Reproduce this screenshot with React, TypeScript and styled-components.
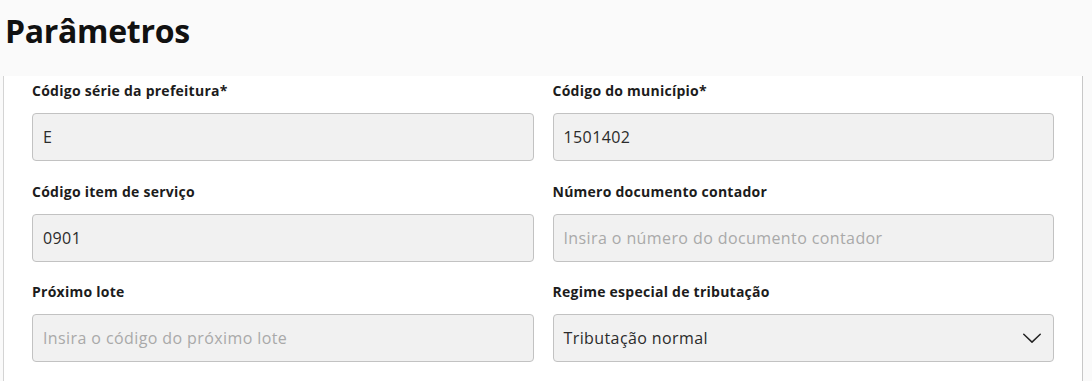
import styled, { createGlobalStyle } from 'styled-components'

const GlobalStyle = createGlobalStyle`
  html, body {
    margin: 0;
    padding: 0;
    background: #fafafa;
    font-family: 'Open Sans', 'Noto Sans', sans-serif;
  }
`

const Page = styled.div`
  width: 1092px;
  height: 381px;
  overflow: hidden;
  background: #fafafa;
  display: flex;
  flex-direction: column;
`

const Title = styled.h1`
  margin: 0;
  height: 76px;
  flex: none;
  padding: 8px 0 0 5px;
  box-sizing: border-box;
  font-size: 32px;
  font-weight: 700;
  letter-spacing: -0.3px;
  line-height: 46px;
  color: #111;
`

const Card = styled.div`
  flex: 1;
  margin: 0 9px 0 3px;
  background: #fff;
  border-left: 1px solid #d4d4d4;
  border-right: 1px solid #c8c8c8;
  padding: 4px 28px 20px 28px;
  display: grid;
  grid-template-columns: 1fr 1fr;
  align-content: start;
  column-gap: 19px;
  row-gap: 19.5px;
`

const Field = styled.div`
  display: flex;
  flex-direction: column;
`

const Label = styled.label`
  font-size: 14px;
  font-weight: 700;
  color: #1c1c1c;
  line-height: 22px;
  margin-bottom: 11px;
  letter-spacing: 0.25px;
`

const Control = styled.div<{ $placeholder?: boolean }>`
  height: 48px;
  box-sizing: border-box;
  border: 1px solid #c2c2c2;
  border-radius: 4px;
  background: #f1f1f1;
  padding: 0 10px;
  display: flex;
  align-items: center;
  justify-content: space-between;
  font-size: 16px;
  letter-spacing: 0.4px;
  color: ${(p) => (p.$placeholder ? '#a9a9a9' : '#2b2b2b')};
`

const Chevron = () => (
  <svg width="22" height="22" viewBox="0 0 24 24" fill="none" stroke="#222" strokeWidth="1.6" strokeLinecap="round" strokeLinejoin="round">
    <polyline points="3 8 12 16.5 21 8" />
  </svg>
)

const fields = [
  { label: 'Código série da prefeitura*', value: 'E' },
  { label: 'Código do município*', value: '1501402' },
  { label: 'Código item de serviço', value: '0901' },
  { label: 'Número documento contador', placeholder: 'Insira o número do documento contador' },
  { label: 'Próximo lote', placeholder: 'Insira o código do próximo lote' },
  { label: 'Regime especial de tributação', value: 'Tributação normal', select: true },
]

export default function App() {
  return (
    <Page>
      <GlobalStyle />
      <Title>Parâmetros</Title>
      <Card>
        {fields.map((f) => (
          <Field key={f.label}>
            <Label>{f.label}</Label>
            <Control $placeholder={!f.value}>
              <span>{f.value ?? f.placeholder}</span>
              {f.select && <Chevron />}
            </Control>
          </Field>
        ))}
      </Card>
    </Page>
  )
}
